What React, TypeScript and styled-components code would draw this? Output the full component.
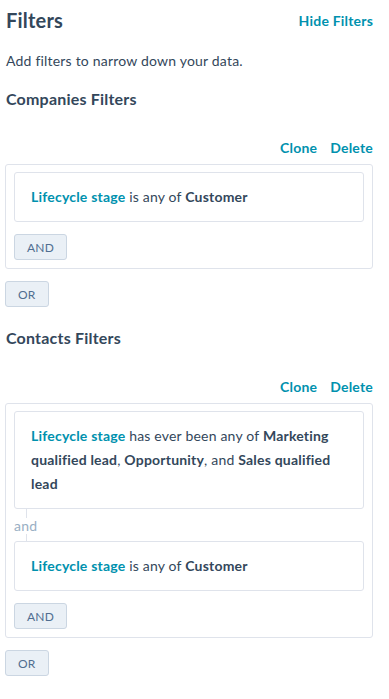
import React from "react";
import styled, { createGlobalStyle } from "styled-components";

const GlobalStyle = createGlobalStyle`
  body {
    margin: 0;
    background: #ffffff;
    font-family: Lato, "Open Sans", sans-serif;
    letter-spacing: 0.2px;
    color: #33475b;
  }
`;

const Page = styled.div`
  width: 368px;
  padding: 0 16px 24px 5px;
`;

const Header = styled.div`
  height: 40px;
  display: flex;
  justify-content: space-between;
  align-items: center;
`;

const Title = styled.h1`
  margin: 0;
  padding-left: 1px;
  font-size: 20px;
  font-weight: 700;
  color: #33475b;
`;

const Link = styled.a`
  color: #0091ae;
  font-size: 14px;
  font-weight: 700;
  cursor: pointer;
  text-decoration: none;
`;

const Description = styled.p`
  margin: 9px 0 0 1px;
  font-size: 14px;
  line-height: 24px;
`;

const SectionTitle = styled.h2<{ $gap: number }>`
  margin: ${(p) => p.$gap}px 0 0 1px;
  font-size: 16px;
  line-height: 24px;
  font-weight: 700;
  color: #33475b;
`;

const Actions = styled.div`
  margin-top: 24px;
  height: 24px;
  display: flex;
  justify-content: flex-end;
  align-items: center;
  gap: 13px;
`;

const Group = styled.div`
  margin-top: 5px;
  border: 1px solid #dfe3eb;
  border-radius: 3px;
  padding: 7px 8px 8px;
`;

const Condition = styled.div`
  border: 1px solid #dfe3eb;
  border-radius: 3px;
  padding: 12px 16px 12px;
  font-size: 14px;
  line-height: 24px;
  color: #33475b;
`;

const Property = styled.span`
  color: #0091ae;
  font-weight: 700;
`;

const Value = styled.b`
  font-weight: 700;
`;

const Connector = styled.div`
  display: flex;
  flex-direction: column;
`;

const Line = styled.div<{ $h: number }>`
  margin-left: 12px;
  width: 1px;
  height: ${(p) => p.$h}px;
  background: #dfe3eb;
`;

const AndLabel = styled.span`
  font-size: 14px;
  line-height: 16px;
  color: #99afc4;
`;

const LogicButton = styled.button<{ $gap: number }>`
  display: block;
  margin-top: ${(p) => p.$gap}px;
  height: 26px;
  padding: 0 12px;
  background: #eaf0f6;
  border: 1px solid #cbd6e2;
  border-radius: 3px;
  color: #506e91;
  font-family: Lato, "Open Sans", sans-serif;
  letter-spacing: 0.2px;
  font-size: 12px;
  cursor: pointer;
`;

const App = () => {
  return (
    <Page>
      <GlobalStyle />
      <Header>
        <Title>Filters</Title>
        <Link>Hide Filters</Link>
      </Header>
      <Description>Add filters to narrow down your data.</Description>

      <SectionTitle $gap={14}>Companies Filters</SectionTitle>
      <Actions>
        <Link>Clone</Link>
        <Link>Delete</Link>
      </Actions>
      <Group>
        <Condition>
          <Property>Lifecycle stage</Property> is any of <Value>Customer</Value>
        </Condition>
        <LogicButton $gap={12}>AND</LogicButton>
      </Group>
      <LogicButton $gap={12}>OR</LogicButton>

      <SectionTitle $gap={19}>Contacts Filters</SectionTitle>
      <Actions>
        <Link>Clone</Link>
        <Link>Delete</Link>
      </Actions>
      <Group>
        <Condition>
          <Property>Lifecycle stage</Property> has ever been any of{" "}
          <Value>Marketing qualified lead</Value>, <Value>Opportunity</Value>, and{" "}
          <Value>Sales qualified lead</Value>
        </Condition>
        <Connector>
          <Line $h={9} />
          <AndLabel>and</AndLabel>
          <Line $h={7} />
        </Connector>
        <Condition>
          <Property>Lifecycle stage</Property> is any of <Value>Customer</Value>
        </Condition>
        <LogicButton $gap={12}>AND</LogicButton>
      </Group>
      <LogicButton $gap={12}>OR</LogicButton>
    </Page>
  );
};

export default App;
